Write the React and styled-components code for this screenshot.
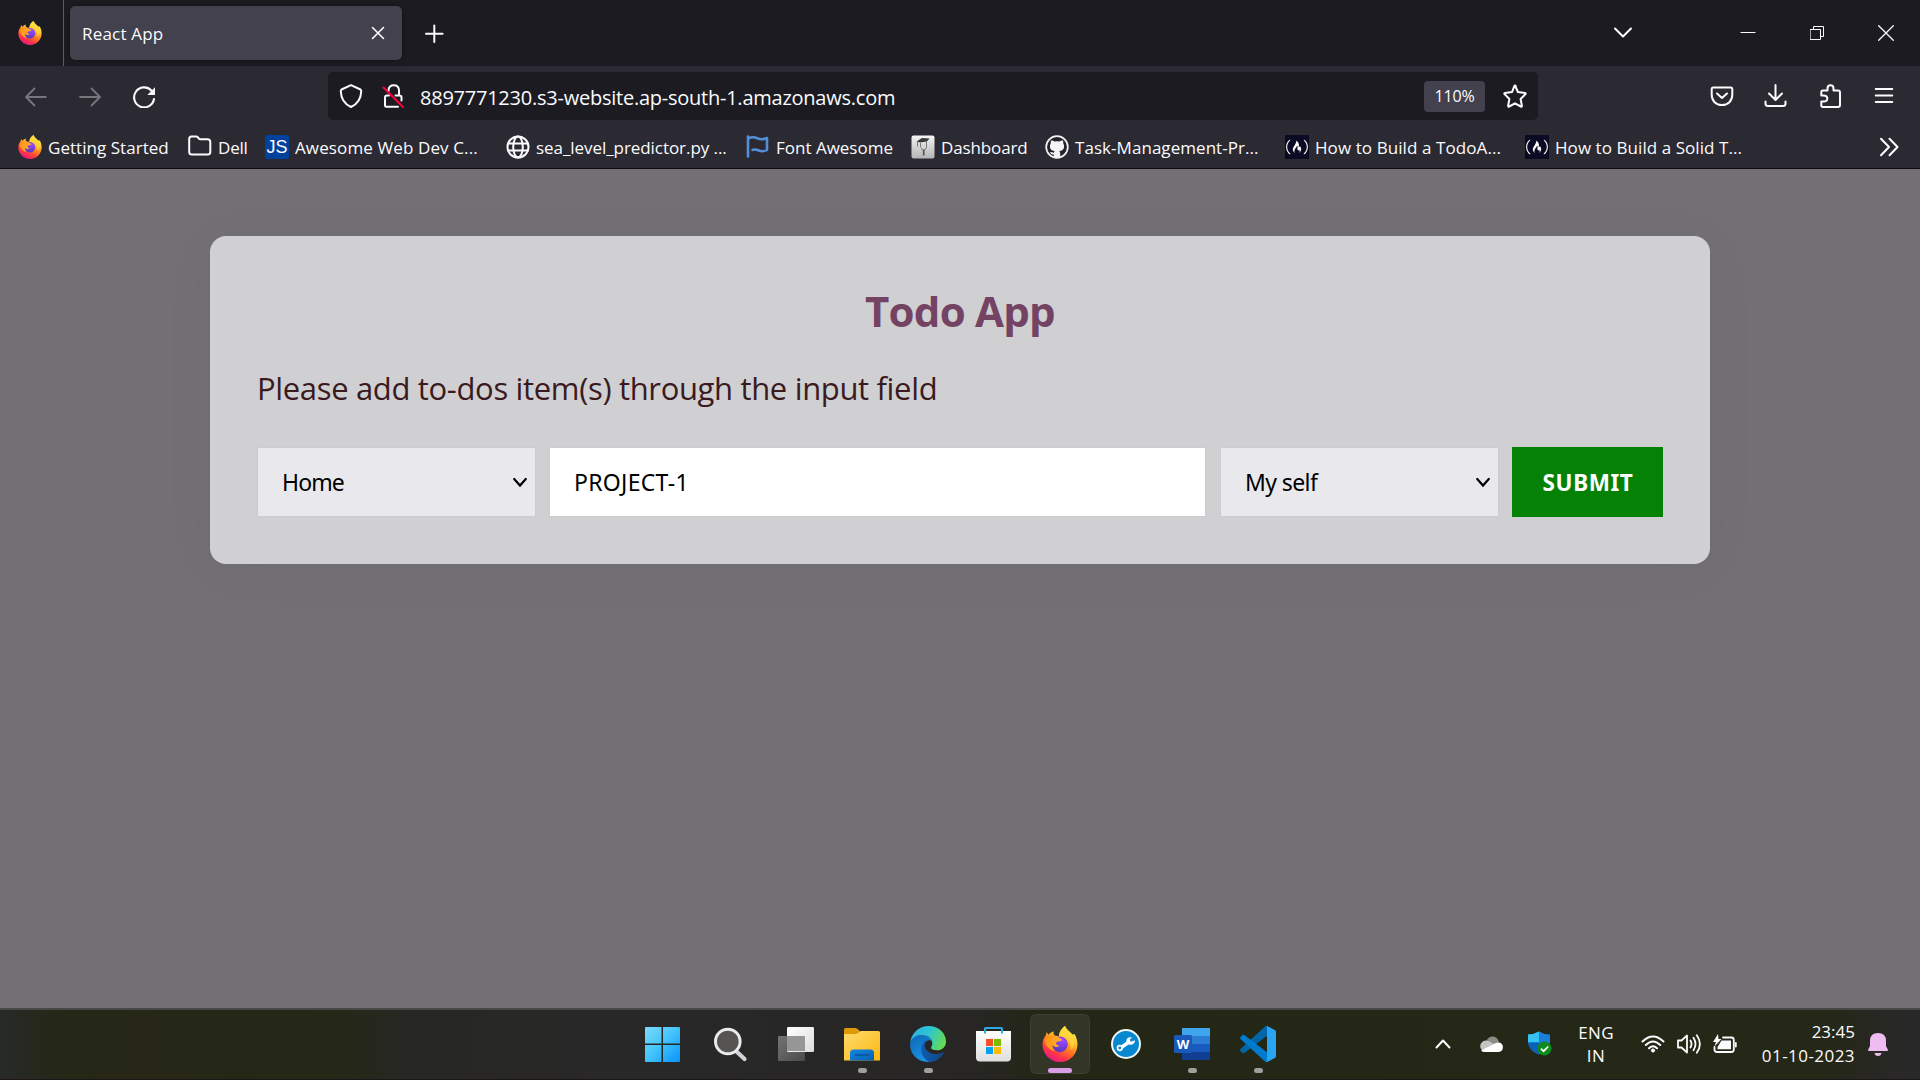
import React from "react";
import styled, { createGlobalStyle, css } from "styled-components";
import { FaFreeCodeCamp } from "react-icons/fa";

const GlobalStyle = createGlobalStyle`
  *, *::before, *::after { box-sizing: border-box; }
  html, body { margin: 0; padding: 0; }
  body {
    font-family: "Open Sans", "Noto Sans", sans-serif;
    font-size: 17px;
    color: #fbfbfe;
    overflow: hidden;
  }
  svg { display: block; flex: none; }
`;

const Screen = styled.div`
  width: 1920px;
  height: 1080px;
  display: flex;
  flex-direction: column;
`;

/* ---------- browser chrome ---------- */

const TitleBar = styled.header`
  flex: none;
  height: 66px;
  display: flex;
  align-items: center;
  background: #1c1b22;
`;

const PinnedView = styled.div`
  width: 64px;
  height: 66px;
  padding-left: 18px;
  display: flex;
  align-items: center;
  border-right: 1px solid #5b5b61;
`;

const Tab = styled.div`
  width: 332px;
  height: 54px;
  margin-left: 6px;
  padding: 0 16px 0 12px;
  display: flex;
  align-items: center;
  justify-content: space-between;
  background: #42414d;
  border-radius: 5px;
  box-shadow: 0 0 4px rgba(0, 0, 0, 0.5);
`;

const Label = styled.span`
  white-space: nowrap;
  letter-spacing: ${(p) => p.$track || 0}px;
`;

const NewTab = styled.div`
  margin-left: 22px;
`;

const WindowControls = styled.div`
  margin-left: auto;
  padding-right: 22px;
  display: flex;
  align-items: center;
`;

const ControlSlot = styled.div`
  display: flex;
  justify-content: center;
  width: 24px;
  margin-left: ${(p) => p.$gap || 0}px;
`;

const NavBar = styled.nav`
  flex: none;
  height: 60px;
  padding: 0 24px;
  display: flex;
  align-items: center;
  background: #2b2a33;
`;

const NavGroup = styled.div`
  display: flex;
  align-items: center;
  gap: 30px;
  color: ${(p) => (p.$dim ? "#77767d" : "#fbfbfe")};
`;

const UrlBar = styled.div`
  width: 1210px;
  height: 48px;
  margin: 0 172px;
  padding: 0 11px 0 11px;
  display: flex;
  align-items: center;
  background: #1c1b22;
  border-radius: 5px;
`;

const Identity = styled.div`
  display: flex;
  gap: 18px;
`;

const UrlText = styled.span`
  margin-left: 15px;
  padding-top: 2px;
  font-size: 20px;
  letter-spacing: -0.24px;
  white-space: nowrap;
`;

const ZoomBadge = styled.span`
  width: 61px;
  height: 31px;
  margin-left: auto;
  margin-right: 18px;
  display: flex;
  align-items: center;
  justify-content: center;
  font-size: 16px;
  letter-spacing: -0.15px;
  background: #42414d;
  border-radius: 4px;
`;

const Bookmarks = styled.div`
  flex: none;
  height: 43px;
  padding: 0 21px 0 18px;
  display: flex;
  align-items: center;
  background: #2b2a33;
  border-bottom: 1px solid #0c0c0d;
`;

const Bookmark = styled.div`
  width: ${(p) => p.$w}px;
  display: flex;
  align-items: center;
  gap: 6px;
`;

const Favicon = styled.span`
  flex: none;
  width: 24px;
  height: 24px;
  display: flex;
  align-items: center;
  justify-content: center;
  ${(p) =>
    p.$kind === "js" &&
    css`
      background: #00419c;
      border-radius: 2px;
      font-family: "Liberation Sans", sans-serif;
      font-size: 18px;
    `}
  ${(p) =>
    p.$kind === "fcc" &&
    css`
      background: #0a0a23;
    `}
`;

const Overflow = styled.div`
  margin-left: auto;
`;

/* ---------- page ---------- */

const Page = styled.main`
  flex: 1;
  padding-top: 67px;
  background: #727073;
`;

const Card = styled.section`
  width: 1500px;
  height: 328px;
  margin: 0 auto;
  padding: 45px 47px 0;
  background: #d0d0d2;
  border-radius: 16px;
  box-shadow: 0 5px 60px rgba(0, 0, 0, 0.04);
`;

const Title = styled.h1`
  margin: 0 0 25px;
  font-size: 42px;
  line-height: 60px;
  font-weight: 700;
  letter-spacing: -0.76px;
  text-align: center;
  color: #744363;
`;

const Hint = styled.p`
  margin: 0 0 37px;
  font-size: 31px;
  line-height: 44px;
  letter-spacing: -0.34px;
  white-space: nowrap;
  color: #3a1a1e;
`;

const Form = styled.div`
  height: 70px;
  display: flex;
`;

const field = css`
  height: 70px;
  display: flex;
  align-items: center;
  font-family: "Noto Sans", "Open Sans", sans-serif;
  font-size: 23px;
  border: 1px solid #cccccc;
  color: #000;
`;

const SelectBox = styled.div`
  ${field}
  width: 279px;
  justify-content: space-between;
  padding: 0 7px 0 24px;
  background: #e9e9ed;
`;

const TextField = styled.div`
  ${field}
  width: 657px;
  margin: 0 14px 0 13px;
  padding-left: 24px;
  background: #fff;
`;

const Submit = styled.button`
  width: 151px;
  height: 70px;
  margin-left: auto;
  padding: 0 0 0 1px;
  border: 0;
  background: #058205;
  color: #fff;
  font-family: "Noto Sans", sans-serif;
  font-size: 22.5px;
  font-weight: 700;
  letter-spacing: 0.6px;
`;

/* ---------- taskbar ---------- */

const Taskbar = styled.footer`
  flex: none;
  height: 72px;
  display: grid;
  grid-template-columns: 634px 656px 1fr;
  align-items: center;
  border-top: 2px solid #484846;
  border-bottom: 1px solid #1f161a;
  background: linear-gradient(
    90deg,
    #272a27 0,
    #252717 60px,
    #262716 130px,
    #252817 340px,
    #272725 420px,
    #292828 640px,
    #272625 970px,
    #242616 1040px,
    #252717 1830px,
    #292828 1900px
  );
`;

const Apps = styled.div`
  grid-column: 2;
  height: 69px;
  padding-top: 4px;
  display: flex;
  gap: 6px;
`;

const AppTile = styled.div`
  width: 60px;
  height: 60px;
  display: flex;
  flex-direction: column;
  align-items: center;
  justify-content: space-between;
  padding: 12px 0 0;
  border-radius: 6px;
  ${(p) =>
    p.$active &&
    css`
      background: rgba(255, 255, 255, 0.07);
      box-shadow: inset 0 0 0 1px rgba(255, 255, 255, 0.05);
    `}
`;

const Indicator = styled.span`
  width: ${(p) => (p.$active ? 24 : 9)}px;
  height: 5px;
  margin-bottom: 1px;
  border-radius: 3px;
  background: ${(p) => (p.$active ? "#da9ee6" : "#a0a09b")};
`;

const Tray = styled.div`
  height: 69px;
  padding: 0 32px 2px 145px;
  display: flex;
  align-items: center;
`;

const TrayIcon = styled.div`
  margin-right: ${(p) => p.$after}px;
`;

const Stack = styled.div`
  display: flex;
  flex-direction: column;
  align-items: ${(p) => p.$align};
  width: ${(p) => p.$w}px;
  margin-right: ${(p) => p.$after}px;
  line-height: ${(p) => p.$line}px;
`;

/* ---------- drawings ---------- */

const Line = ({ w = 24, h = 24, sw = 2, children, ...rest }) => (
  <svg width={w} height={h} viewBox={`0 0 ${w} ${h}`} fill="none" stroke="currentColor"
    strokeWidth={sw} strokeLinecap="round" strokeLinejoin="round" {...rest}>
    {children}
  </svg>
);

const Firefox = ({ size, id }) => (
  <svg width={size} height={size} viewBox="-0.5 0 35 35">
    <defs>
      <linearGradient id={`${id}b`} x1="0.8" y1="0.05" x2="0.3" y2="1">
        <stop offset="0" stopColor="#fff44f" />
        <stop offset="0.3" stopColor="#ffc52e" />
        <stop offset="0.55" stopColor="#ff7a1f" />
        <stop offset="0.78" stopColor="#ff3647" />
        <stop offset="1" stopColor="#e3158a" />
      </linearGradient>
      <radialGradient id={`${id}o`} cx="0.65" cy="0.2" r="0.9">
        <stop offset="0" stopColor="#a44bff" />
        <stop offset="0.5" stopColor="#7a3fe0" />
        <stop offset="1" stopColor="#4a3bb0" />
      </radialGradient>
      <linearGradient id={`${id}h`} x1="0" y1="0" x2="1" y2="0.4">
        <stop offset="0" stopColor="#ff8a16" />
        <stop offset="1" stopColor="#ffb52b" />
      </linearGradient>
    </defs>
    <path fill={`url(#${id}b)`} d="M22 0C23.5 4 27 5.5 29.5 8.5L31 7.5C33.2 11 34 14.5 34 18C34 27.5 26.5 35 17 35S0 27.5 0 18C0 13.500 1.800 11 3 9.500L4 6L6 8.500C7.200 7 8.500 6 10.800 5.200C10.400 7 11 8.600 12.500 9.500L16 10C16 5.500 19 2 22 0Z" />
    <circle cx="17" cy="17.800" r="7.600" fill={`url(#${id}o)`} />
    <path fill={`url(#${id}h)`} d="M2 13C6 9 10 9 13 10.500C15.500 10.500 18.500 12.500 19 13.800C16.500 15.200 13.800 14.800 13 16.500C13.500 18.500 15 19 16.500 19C14 21.500 11.500 20.500 9.500 18.500C9.500 21 10.500 23 12 24.500C6 23.500 2.500 18.500 2 13Z" />
    <path fill="#ffd93b" opacity="0.7" d="M22 0C23.500 4 27 5.500 29.500 9C32 14 31 20 27.500 23.500C28 17 25.500 12 21 10L16 10C16 5.500 19 2 22 0Z" />
  </svg>
);

const Chevron = () => (
  <Line w={16} h={12} sw={2.2} strokeLinejoin="miter"><path d="M2.200 3L8 9.500L13.800 3" /></Line>
);

const WinLogo = () => (
  <svg width="36" height="36" viewBox="3.500 0 36 36" overflow="visible">
    <defs>
      <linearGradient id="win" gradientUnits="userSpaceOnUse" x1="0" y1="0" x2="36" y2="36">
        <stop offset="0" stopColor="#82dcfb" /><stop offset="0.500" stopColor="#45c5fb" /><stop offset="1" stopColor="#0a95fa" />
      </linearGradient>
    </defs>
    <path fill="url(#win)" d="M3.500 1H19V17.500H2.500V2Q2.500 1 3.500 1ZM20.500 1H36.500Q37.500 1 37.500 2V17.500H20.500ZM2.500 19H19V36H3.500Q2.500 36 2.500 35ZM20.500 19H37.500V35Q37.500 36 36.500 36H20.500Z" />
  </svg>
);

const SearchIcon = () => (
  <svg width="36" height="36" viewBox="0 0 36 36">
    <path d="M24 25L32.500 33" stroke="#cfd3d8" strokeWidth="4.200" strokeLinecap="round" />
    <circle cx="15.800" cy="15.500" r="12.300" fill="#565353" stroke="#e9ebed" strokeWidth="3" />
  </svg>
);

const TaskView = () => (
  <svg width="36" height="36" viewBox="0 0 36 36">
    <defs>
      <linearGradient id="tv" x1="0" y1="0" x2="1" y2="1"><stop offset="0" stopColor="#fff" /><stop offset="1" stopColor="#dcdcdc" /></linearGradient>
      <linearGradient id="tw" x1="0" y1="0" x2="1" y2="1"><stop offset="0" stopColor="#747474" /><stop offset="1" stopColor="#4a4a4a" /></linearGradient>
    </defs>
    <rect x="0" y="10" width="27" height="25" rx="1.200" fill="url(#tw)" />
    <rect x="9" y="1" width="27" height="25" rx="1.200" fill="url(#tv)" />
    <path d="M9 10H26Q27 10 27 11V25H10Q9 25 9 24Z" fill="#969696" />
  </svg>
);

const Explorer = () => (
  <svg width="36" height="36" viewBox="0 0 36 36">
    <defs>
      <linearGradient id="ex" x1="0" y1="0" x2="1" y2="1"><stop offset="0" stopColor="#ffdc6e" /><stop offset="1" stopColor="#fbb710" /></linearGradient>
      <linearGradient id="ey" x1="0" y1="0" x2="1" y2="1"><stop offset="0" stopColor="#1587dd" /><stop offset="1" stopColor="#0560b4" /></linearGradient>
    </defs>
    <path fill="#dd9a05" d="M0 3.500Q0 2 1.500 2H11Q12.500 2 13.500 3L16 5L13 9H0Z" />
    <path fill="url(#ex)" d="M0 8H11.500Q13 8 14 7L15 6Q16 5 17.500 5H34.500Q36 5 36 6.500V34.500H0Z" />
    <path fill="url(#ey)" d="M6 34.500V27Q6 23.500 9.500 23.500H26.500Q30 23.500 30 27V34.500Z" />
    <path stroke="#084e92" strokeWidth="1.400" d="M11 29H25" />
  </svg>
);

const Edge = () => (
  <svg width="36" height="36" viewBox="0 0 36 36">
    <defs>
      <linearGradient id="ea" x1="0" y1="0.300" x2="1" y2="0.600"><stop offset="0" stopColor="#2aaeea" /><stop offset="0.500" stopColor="#30c6cb" /><stop offset="1" stopColor="#66dc4d" /></linearGradient>
      <linearGradient id="eb" x1="0" y1="0" x2="0.500" y2="1"><stop offset="0" stopColor="#0c66b4" /><stop offset="1" stopColor="#1a92e4" /></linearGradient>
      <linearGradient id="ec" x1="0" y1="0" x2="1" y2="0"><stop offset="0" stopColor="#0f5cae" /><stop offset="1" stopColor="#12447f" /></linearGradient>
    </defs>
    <path fill="url(#eb)" d="M0 18C1 12 6 9 12 9C18 9 21.500 12 22 15C18.500 12.800 14 15.500 13.500 21C13.500 28 17 34 22 35.500C9 38 0 29 0 18Z" />
    <path fill="url(#ec)" d="M15 15C9.500 20 9.500 31 19.500 36C26 35.800 31 32 33.500 27.800C34 26.800 33.300 26.200 32.300 26.700C24 30.500 14.500 26 14.700 19C14.800 17 16 15 18 14Z" />
    <path fill="url(#ea)" d="M0 17C1.300 7 9 0 18.500 0C29 0 36 7.500 36 15.500C36 21 32 24.300 27 24.300C23 24.300 21 22.800 21 21.800C21 21 22.300 20 22.300 17.500C22.300 12.500 18 9 12 9C6 9 1.500 12.500 0 17Z" />
  </svg>
);

const Store = () => (
  <svg width="36" height="36" viewBox="0.500 0 36 36">
    <defs>
      <linearGradient id="st" x1="0" y1="0" x2="0" y2="1"><stop offset="0" stopColor="#fff" /><stop offset="1" stopColor="#dedede" /></linearGradient>
    </defs>
    <path fill="url(#st)" d="M.500 5H35.500V31.500Q35.500 35.500 31.500 35.500H4.500Q.500 35.500 .500 31.500Z" />
    <path fill="none" stroke="#2aa9e8" strokeWidth="2" d="M9.500 7.500V2.500Q9.500 2 10 2H26Q26.500 2 26.500 2.500V7.500" />
    <path fill="#f25022" d="M10.500 13H17.500V20H10.500Z" /><path fill="#7fba00" d="M18.500 13H25.500V20H18.500Z" />
    <path fill="#00a4ef" d="M10.500 21H17.500V28H10.500Z" /><path fill="#ffb900" d="M18.500 21H25.500V28H18.500Z" />
  </svg>
);

const WrenchApp = () => (
  <svg width="36" height="36" viewBox="0 0 36 36">
    <circle cx="18" cy="18" r="14" fill="#0688d1" stroke="#f2f6f8" strokeWidth="2" />
    <path d="M12.500 22L21 16" stroke="#fff" strokeWidth="3.400" />
    <circle cx="11.800" cy="22" r="2.300" fill="#0688d1" stroke="#fff" strokeWidth="1.700" />
    <path fill="#fff" d="M18.300 15.700C18 12.500 20.500 10.500 24 11.500L21.600 13.700L22.800 15.700L27 14.300C27 18 23.500 19.800 20.500 18.300Z" />
  </svg>
);

const WordBadge = styled.div`
  width: 36px;
  height: 36px;
  padding: 9px 0 0;
  background:
    linear-gradient(#41a5ee 0 25%, #2b7cd3 25% 50%, #185abd 50% 75%, #103f91 75%) 8px 2px / 28px 32px no-repeat;
`;

const WordLetter = styled.span`
  width: 18px;
  height: 18px;
  display: flex;
  align-items: center;
  justify-content: center;
  border-radius: 1.5px;
  background: #1a58ba;
  font-size: 13px;
  font-weight: 700;
  line-height: 18px;
`;

const VsCode = () => (
  <svg width="36" height="36" viewBox="0 0 100 100">
    <path fill="#0065a9" d="M96.460 10.800L75.860.880C73.470-.270 70.620.210 68.750 2.080L1.300 63.580C-.520 65.230-.510 68.090 1.300 69.740L6.810 74.750C8.300 76.100 10.520 76.200 12.130 74.990L93.360 13.370C96.080 11.300 100 13.240 100 16.670C100 14.030 98.620 11.830 96.460 10.800Z" />
    <path fill="#007acc" d="M96.460 89.200L75.860 99.120C73.470 100.270 70.620 99.790 68.750 97.920L1.300 36.420C-.520 34.770-.510 31.910 1.300 30.260L6.810 25.250C8.300 23.900 10.520 23.800 12.130 25.010L93.360 86.630C96.080 88.700 100 86.760 100 83.330C100 85.970 98.620 88.170 96.460 89.200Z" />
    <path fill="#28a4f2" d="M75.860 99.130C73.470 100.280 70.620 99.790 68.750 97.920C71.060 100.230 75 98.600 75 95.340V4.660C75 1.400 71.060-.230 68.750 2.080C70.620.210 73.470-.280 75.860.870L96.460 10.780C98.620 11.820 100 14 100 16.410V83.590C100 85.990 98.620 88.180 96.460 89.220Z" />
  </svg>
);

const Dash = () => (
  <svg width="24" height="24" viewBox="0 0 24 24">
    <defs><linearGradient id="da" x1="0" y1="0" x2="0" y2="1"><stop offset="0" stopColor="#f4f4f4" /><stop offset="1" stopColor="#b4b4b4" /></linearGradient></defs>
    <rect x=".500" y=".500" width="23" height="23" rx="2" fill="url(#da)" />
    <path fill="#3a3a3a" d="M5.500 6.500L11 3L18.500 3.500L16 6.500L9 7.500Z" />
    <path stroke="#777" strokeWidth="1" fill="none" d="M6.500 6.500V11.500M9.500 8V12M15.500 7V12.500L13.500 15.500M9.800 12.500L12 15.500" />
    <path d="M12.700 14.500V20.500" stroke="#555" strokeWidth="1.700" />
  </svg>
);

const GitHub = () => (
  <svg width="24" height="24" viewBox="0 0 24 24">
    <circle cx="12" cy="12" r="10.800" fill="#24232b" stroke="#f4f4f6" strokeWidth="1.700" />
    <path fill="#f4f4f6" d="M6 5.500Q8 5.300 9.500 6.600Q12 6 14.500 6.600Q16 5.300 18 5.500Q18.500 7 18.200 8.300Q19.500 10 19 12.500Q18.300 15.600 14.300 16Q15.200 17 15.200 18.500V22Q12 23 8.800 22V19.500Q6 20 5 17.200Q7 16.800 8.800 18Q8.800 16.800 9.700 16Q5.700 15.600 5 12.500Q4.500 10 5.800 8.300Q5.500 7 6 5.500Z" />
  </svg>
);

const BOOKMARKS = [
  { text: "Getting Started", w: 170, track: 0.04, icon: <Firefox size={24} id="fb" /> },
  {
    text: "Dell", w: 77, track: -0.2,
    icon: <Line><path d="M3.500 1.500H8.300Q9 1.500 9.500 2L11 3.700Q11.500 4.200 12.200 4.200H19.500Q22.300 4.200 22.300 7V17Q22.300 19.500 19.500 19.500H4Q1.200 19.500 1.200 17V4Q1.200 1.500 3.500 1.500Z" /></Line>,
  },
  { text: "Awesome Web Dev C...", w: 241, track: 0.12, kind: "js", icon: "JS" },
  {
    text: "sea_level_predictor.py ...", w: 240, track: -0.06,
    icon: <Line><circle cx="12" cy="12" r="10.500" /><ellipse cx="12" cy="12" rx="4.800" ry="10.500" /><path d="M2 8.500H22M2 15.500H22" /></Line>,
  },
  {
    text: "Font Awesome", w: 165, track: 0,
    icon: <Line stroke="#528fd9" sw={2.6}><path d="M2 1.500V21.500M2 3.500C6 1.500 9 2 11.500 3.300S17.500 4.500 21 3V15C18 16.800 15 16.500 12 15.200S8 14.600 6.500 15" /></Line>,
  },
  { text: "Dashboard", w: 134, track: -0.13, icon: <Dash /> },
  { text: "Task-Management-Pr...", w: 240, track: 0.05, icon: <GitHub /> },
  { text: "How to Build a TodoA...", w: 240, track: 0.085, kind: "fcc", icon: <FaFreeCodeCamp size={22} /> },
  { text: "How to Build a Solid T...", w: 240, track: 0.064, kind: "fcc", icon: <FaFreeCodeCamp size={22} /> },
];

const APPS = [
  { name: "start", icon: <WinLogo /> },
  { name: "search", icon: <SearchIcon /> },
  { name: "taskview", icon: <TaskView /> },
  { name: "explorer", icon: <Explorer />, open: true },
  { name: "edge", icon: <Edge />, open: true },
  { name: "store", icon: <Store /> },
  { name: "firefox", icon: <Firefox size={36} id="ft" />, open: true, active: true },
  { name: "wrench", icon: <WrenchApp /> },
  { name: "word", icon: <WordBadge><WordLetter>W</WordLetter></WordBadge>, open: true },
  { name: "code", icon: <VsCode />, open: true },
];

export default function App() {
  return (
    <Screen>
      <GlobalStyle />
      <TitleBar>
        <PinnedView><Firefox size={24} id="fp" /></PinnedView>
        <Tab>
          <Label $track={0.2}>React App</Label>
          <Line w={16} h={16} sw={1.6}><path d="M2.500 2.500L13.500 13.500M13.500 2.500L2.500 13.500" /></Line>
        </Tab>
        <NewTab><Line w={20} h={20} sw={2}><path d="M10.300 2.500V19M2 10.700H18.600" /></Line></NewTab>
        <WindowControls>
          <ControlSlot><Line w={20} h={14} sw={2}><path d="M2 2.500L10 10.500L18 2.500" /></Line></ControlSlot>
          <ControlSlot $gap={101}><Line w={16} h={2} sw={1} strokeLinecap="butt"><path d="M.500 .500H15.500" /></Line></ControlSlot>
          <ControlSlot $gap={45}><Line w={14} h={14} sw={1} strokeLinejoin="miter"><path d="M.500 3.500H10.500V13.500H.500ZM3.500 3.500V.500H13.500V10.500H10.500" /></Line></ControlSlot>
          <ControlSlot $gap={45}><Line w={16} h={16} sw={1.3}><path d="M.700 .700L15.300 15.300M15.300 .700L.700 15.300" /></Line></ControlSlot>
        </WindowControls>
      </TitleBar>

      <NavBar>
        <NavGroup $dim>
          <Line sw={1.8}><path d="M2.500 13H21.800M10.500 4.500L2 13L10.500 21.500" /></Line>
          <Line sw={1.8}><path d="M2 13H21.500M13.500 4.500L22 13L13.500 21.500" /></Line>
          <Line color="#fbfbfe" sw={2.1}>
            <path d="M22 15A10 10 0 1 1 19.400 6.500" />
            <path d="M23 3.200V11H15.300Z" fill="#fbfbfe" stroke="none" />
          </Line>
        </NavGroup>
        <UrlBar>
          <Identity>
            <Line><path d="M12 1.200L21.500 5.500C22.300 6 22.300 6.800 22.200 7.500C22 14 18.500 20 12 23C5.500 20 2 14 1.800 7.500C1.700 6.800 1.700 6 2.500 5.500Z" /></Line>
            <Line>
              <path d="M7.500 7V6Q8 1.200 12.800 1.200T18 6V11.500M14.500 11.500H18.500Q20.500 11.500 20.500 13.500V16.500M17 22.800H5.500Q4 22.800 4 21.300V13.500Q4 11.500 6 11.500H8" />
              <path d="M2.500 3.500L22 23" stroke="#ff0039" />
            </Line>
          </Identity>
          <UrlText>8897771230.s3-website.ap-south-1.amazonaws.com</UrlText>
          <ZoomBadge>110%</ZoomBadge>
          <Line><path d="M12 1.500L14.900 8L22 8.900Q23.200 9.200 22.400 10.100L17.600 15L18.900 21.800Q18.900 23 17.800 22.500L12 19.300L6.200 22.500Q5.100 23 5.100 21.800L6.400 15L1.600 10.100Q.800 9.200 2 8.900L9.100 8L11.200 2.300Q12 .800 12.800 2.300" /></Line>
        </UrlBar>
        <NavGroup>
          <Line><path d="M3 3.500H21Q22.300 3.500 22.300 5V10.500C22.300 17 18 21 12 21S1.700 17 1.700 10.500V5Q1.700 3.500 3 3.500ZM7 9.500L12 14L17 9.500" /></Line>
          <Line><path d="M11.500 1V15.500M5 9.500L11.500 16L18 9.500M1.500 17.500V19.500Q1.500 22 4 22H19Q21.500 22 21.500 19.500V17.500" /></Line>
          <Line><path d="M9.500 6.500V4.500Q9.500 1.200 12.500 1.200T15.500 4.500V6.500H20Q22 6.500 22 8.500V21Q22 23 20 23H5Q3.300 23 3.300 21.300V17.500H5.500Q9.300 17.500 9.300 14.500T5.500 11.500H3.300V8.200Q3.300 6.500 5 6.500Z" /></Line>
          <Line sw={1.9}><path d="M3.700 5H20.300M3.700 11.500H20.300M3.700 18H20.300" /></Line>
        </NavGroup>
      </NavBar>

      <Bookmarks>
        {BOOKMARKS.map((b) => (
          <Bookmark key={b.text} $w={b.w}>
            <Favicon $kind={b.kind}>{b.icon}</Favicon>
            <Label $track={b.track}>{b.text}</Label>
          </Bookmark>
        ))}
        <Overflow><Line w={20} h={20}><path d="M2 1.800L10 10L2 18.200M10.500 1.800L18.500 10L10.500 18.200" /></Line></Overflow>
      </Bookmarks>

      <Page>
        <Card>
          <Title>Todo App</Title>
          <Hint>Please add to-dos item(s) through the input field</Hint>
          <Form>
            <SelectBox><Label $track={-0.9}>Home</Label><Chevron /></SelectBox>
            <TextField><Label $track={0.3}>PROJECT-1</Label></TextField>
            <SelectBox><Label $track={-0.6}>My self</Label><Chevron /></SelectBox>
            <Submit>SUBMIT</Submit>
          </Form>
        </Card>
      </Page>

      <Taskbar>
        <Apps>
          {APPS.map((a) => (
            <AppTile key={a.name} $active={a.active}>
              {a.icon}
              {a.open && <Indicator $active={a.active} />}
            </AppTile>
          ))}
        </Apps>
        <Tray>
          <TrayIcon $after={28}><Line w={16} h={12} sw={2}><path d="M1.500 9.500L8 2.500L14.500 9.500" /></Line></TrayIcon>
          <TrayIcon $after={24}>
            <svg width="25" height="18" viewBox="0 0 25 18">
              <path fill="#8c8c87" d="M7 7C8.500 2.500 12 1 14.500 1.500C17.500 2 19.500 4.500 20 7L14 10Z" />
              <path fill="#c4c4c1" d="M5.500 16.500A5.500 5.500 0 1 1 8 5.700Q11 6 13 8L22 12L14 17Z" />
              <path fill="#fff" d="M5.500 17Q3.500 17 2 15.500L15 9Q17 7 20 7.500A4.800 4.800 0 0 1 19.500 17Z" />
            </svg>
          </TrayIcon>
          <TrayIcon $after={27}>
            <svg width="24" height="25" viewBox="0 0 24 25">
              <path fill="#1a7fd8" d="M11 .500Q16 3.500 22 3.500V11Q21 20 11 23.500Q1 20 0 11V3.500Q6 3.500 11 .500Z" />
              <path fill="#35c1f1" d="M11 .500V11.500H0V3.500Q6 3.500 11 .500Z" />
              <path fill="#0a62b8" d="M0 11.500H11V23.500Q1 20 0 11.500Z" />
              <circle cx="16.500" cy="17.500" r="7" fill="#0f8a1c" />
              <path d="M13 17.700L15.600 20.200L20.200 15.500" fill="none" stroke="#fff" strokeWidth="1.700" />
            </svg>
          </TrayIcon>
          <Stack $w={34} $after={28} $line={23} $align="center">
            <Label $track={0.38}>ENG</Label>
            <Label $track={0.5}>IN</Label>
          </Stack>
          <TrayIcon $after={12}>
            <Line w={24} h={20} sw={2}>
              <path d="M1.500 7.500Q12-2.500 22.500 7.500M4.800 11Q12 4 19.200 11M8 14.200Q12 10.300 16 14.200" />
              <circle cx="12" cy="16.500" r="1.600" fill="currentColor" strokeWidth="1" />
            </Line>
          </TrayIcon>
          <TrayIcon $after={12}>
            <Line w={24} h={20} sw={1.8}>
              <path d="M1 6.500H4.500L10 1.500V18.500L4.500 13.500H1Z" />
              <path d="M13.500 6.500Q15.500 10 13.500 13.500M16.500 3.800Q20.500 10 16.500 16.200M19.800 1.200Q26 10 19.800 18.800" />
            </Line>
          </TrayIcon>
          <TrayIcon $after={24}>
            <Line w={24} h={20} sw={1.8}>
              <path d="M10 3.500H18.500Q20.800 3.500 20.800 6V15.500Q20.800 18 18.500 18H4Q1.500 18 1.500 15.500V13" />
              <path d="M10 6.500H18V15.200H4.500V13L8.500 6.500Z" fill="currentColor" stroke="none" />
              <path d="M22.800 9V12.500" />
              <path d="M5 0L0 8H3L1.500 12.500L8.500 5H5.500Z" fill="currentColor" stroke="none" />
            </Line>
          </TrayIcon>
          <Stack $w={94} $after={13} $line={24} $align="flex-end">
            <Label>23:45</Label>
            <Label $track={0.446}>01-10-2023</Label>
          </Stack>
          <svg width="20" height="24" viewBox="0 0 20 24">
            <path fill="#eebcf0" d="M2 9Q2 1 10 1T18 9V14L20 18Q20 19 19 19H1Q0 19 0 18L2 14ZM6.500 21H13.500Q13 24 10 24T6.500 21Z" />
          </svg>
        </Tray>
      </Taskbar>
    </Screen>
  );
}
